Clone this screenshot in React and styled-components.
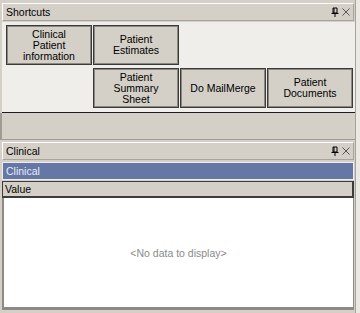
import React from "react";
import styled, { createGlobalStyle } from "styled-components";

const Global = createGlobalStyle`
  html, body { margin: 0; padding: 0; }
  body {
    font-family: "Liberation Sans", "DejaVu Sans", sans-serif;
    font-size: 10.5px;
    color: #000;
    background: #d4d0c8;
  }
`;

const Window = styled.div`
  width: 360px;
  height: 313px;
  display: flex;
  overflow: hidden;
  background: #d4d0c8;
`;

const Main = styled.div`
  width: 356px;
  display: flex;
  flex-direction: column;
`;

const Strip = styled.div`
  width: 4px;
  border-left: 1px solid #a6a29a;
  background-color: #ebe9e4;
  background-image: radial-gradient(#c9c6bf 0.6px, transparent 0.7px);
  background-size: 2px 2px;
`;

const Caption = styled.div`
  height: 16px;
  margin: ${(p) => p.$top}px 1px 0 2px;
  border: 1px solid #a8a49c;
  border-top-color: #fff;
  border-left-color: #fff;
  background: #d4d0c8;
  display: flex;
  align-items: center;
  padding-left: 3px;
  line-height: 16px;
`;

const CaptionText = styled.span`
  flex: 1;
`;

const CaptionTools = styled.div`
  display: flex;
  align-items: center;
  gap: 3px;
  padding-right: 3px;
`;

const ShortcutArea = styled.div`
  margin: 1px 0 0 2px;
  background: #efeeea;
  border-bottom: 1px solid #1c1c1c;
  padding: 3px 0 0 4px;
  box-sizing: border-box;
  height: 91px;
`;

const ButtonGrid = styled.div`
  display: grid;
  grid-template-columns: repeat(4, 86px);
  grid-auto-rows: 40px;
  column-gap: 1px;
  row-gap: 3px;
`;

const ShortcutButton = styled.button`
  grid-column: ${(p) => p.$col};
  grid-row: ${(p) => p.$row};
  margin: 0;
  padding: 0 8px;
  font: inherit;
  color: #000;
  background: #d4d0c8;
  border: 1px solid #3a3a3a;
  box-shadow: inset 1px 1px 0 #8c8982, inset -1px -1px 0 #8c8982;
  line-height: 11px;
  text-align: center;
  cursor: default;
`;

const Splitter = styled.div`
  height: 26px;
  border-left: 2px solid #a09c94;
  border-bottom: 1px solid #a09c94;
  background: #d4d0c8;
`;

const ClinicalBody = styled.div`
  flex: 1;
  margin: 2px 1px 3px 2px;
  display: flex;
  flex-direction: column;
`;

const GroupRow = styled.div`
  height: 16px;
  line-height: 16px;
  padding-left: 3px;
  background: #6577a7;
  color: #e8ecf6;
  border: 1px solid #eeede9;
`;

const Header = styled.div`
  margin-top: 1px;
  height: 14px;
  line-height: 14px;
  padding-left: 2px;
  background: #d4d0c8;
  border: 1px solid #3c3c3c;
  border-right-width: 2px;
  border-bottom-width: 2px;
`;

const Grid = styled.div`
  flex: 1;
  background: #fff;
  border-left: 2px solid #8d8a84;
  border-bottom: 3px solid #8d8a84;
  border-right: 1px solid #8d8a84;
  display: flex;
  align-items: center;
  justify-content: center;
`;

const Empty = styled.span`
  color: #8a8a8a;
`;

const PinIcon = () => (
  <svg width="8" height="10" viewBox="0 0 8 10">
    <path d="M2 1h4v5H2z M3 1v5" fill="none" stroke="#000" strokeWidth="1" />
    <path d="M0.5 6.5h7" stroke="#000" strokeWidth="1" />
    <path d="M4 7v3" stroke="#000" strokeWidth="1" />
  </svg>
);

const CloseIcon = () => (
  <svg width="8" height="8" viewBox="0 0 8 8">
    <path d="M0.5 0.5l7 7M7.5 0.5l-7 7" stroke="#555" strokeWidth="1" />
  </svg>
);

const PanelCaption = ({ title, top }) => (
  <Caption $top={top}>
    <CaptionText>{title}</CaptionText>
    <CaptionTools>
      <PinIcon />
      <CloseIcon />
    </CaptionTools>
  </Caption>
);

const shortcuts = [
  { label: "Clinical Patient information", col: 1, row: 1 },
  { label: "Patient Estimates", col: 2, row: 1 },
  { label: "Patient Summary Sheet", col: 2, row: 2 },
  { label: "Do MailMerge", col: 3, row: 2 },
  { label: "Patient Documents", col: 4, row: 2 },
];

const App = () => {
  return (
    <Window>
      <Global />
      <Main>
        <PanelCaption title="Shortcuts" top={3} />
        <ShortcutArea>
          <ButtonGrid>
            {shortcuts.map((s) => (
              <ShortcutButton key={s.label} $col={s.col} $row={s.row}>
                {s.label}
              </ShortcutButton>
            ))}
          </ButtonGrid>
        </ShortcutArea>
        <Splitter />
        <PanelCaption title="Clinical" top={2} />
        <ClinicalBody>
          <GroupRow>Clinical</GroupRow>
          <Header>Value</Header>
          <Grid>
            <Empty>&lt;No data to display&gt;</Empty>
          </Grid>
        </ClinicalBody>
      </Main>
      <Strip />
    </Window>
  );
};

export default App;
